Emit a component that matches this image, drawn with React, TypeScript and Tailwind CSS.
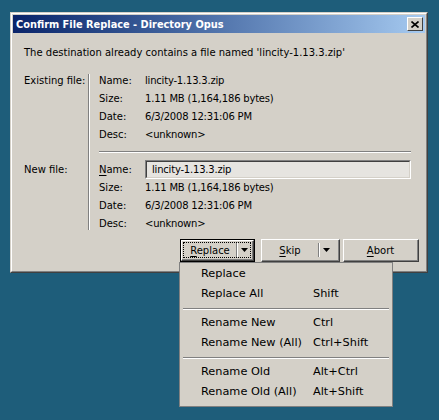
import React from "react";

function Arrow() {
  return (
    <svg width="7" height="4" viewBox="0 0 7 4" className="block">
      <polygon points="0,0 7,0 3.5,4" fill="#000" />
    </svg>
  );
}

function Row({ label, children }: { label: React.ReactNode; children: React.ReactNode }) {
  return (
    <div className="h-[18px] flex items-center">
      <div className="w-[46px] tracking-normal">{label}</div>
      <div>{children}</div>
    </div>
  );
}

const menuItems: (null | [string, string])[] = [
  ["Replace", ""],
  ["Replace All", "Shift"],
  null,
  ["Rename New", "Ctrl"],
  ["Rename New (All)", "Ctrl+Shift"],
  null,
  ["Rename Old", "Alt+Ctrl"],
  ["Rename Old (All)", "Alt+Shift"],
];

export default function App() {
  return (
    <div className="relative w-[439px] h-[420px] bg-[#1e5d7a] pl-[10px] pt-[12px] font-['DejaVu_Sans',Verdana,sans-serif] text-[10px] text-black leading-none">
      <div className="w-[418px] h-[261px] border border-t-[#d4d0c8] border-l-[#d4d0c8] border-r-[#404040] border-b-[#404040] bg-[#d4d0c8]">
        <div className="h-full border border-t-white border-l-white border-r-[#808080] border-b-[#808080] p-[1px] flex flex-col">
          {/* title bar */}
          <div className="h-[18px] flex items-center justify-between pl-[3px] pr-[2px] bg-linear-to-r from-[#0a246a] to-[#a6caf0]">
            <span className="font-bold text-white text-[9.8px] pt-[2px]">Confirm File Replace - Directory Opus</span>
            <div className="w-[16px] h-[14px] bg-[#d4d0c8] border border-t-white border-l-white border-r-[#404040] border-b-[#404040] flex items-center justify-center">
              <svg width="8" height="7" viewBox="0 0 8 7" className="block">
                <path d="M0.5 0.5 L7.5 6.5 M7.5 0.5 L0.5 6.5" stroke="#000" strokeWidth="1.6" />
              </svg>
            </div>
          </div>

          {/* body */}
          <div className="pl-[11px] pt-[11px]">
            <div className="h-[18px] flex items-center">The destination already contains a file named 'lincity-1.13.3.zip'</div>
            <div className="mt-[10px] flex">
              <div className="w-[64px] flex flex-col">
                <div className="h-[18px] flex items-center">Existing file:</div>
                <div className="h-[19px] mt-[70px] flex items-center">New file:</div>
              </div>
              <div className="mt-[2px] mb-[3px] w-[2px] border-l border-l-[#808080] border-r border-r-white" />
              <div className="pl-[9px] w-[321px] tracking-[-0.2px]">
                <Row label="Name:">lincity-1.13.3.zip</Row>
                <Row label="Size:">1.11 MB (1,164,186 bytes)</Row>
                <Row label="Date:">6/3/2008 12:31:06 PM</Row>
                <Row label="Desc:">&lt;unknown&gt;</Row>
                <div className="h-[16px] pt-[7px]">
                  <div className="border-t border-t-[#808080] border-b border-b-white" />
                </div>
                <div className="h-[19px] flex items-center">
                  <div className="w-[46px] tracking-normal">
                    <span className="underline underline-offset-2">N</span>ame:
                  </div>
                  <div className="flex-1 h-[19px] border border-t-[#808080] border-l-[#808080] border-r-white border-b-white">
                    <div className="h-full border border-t-[#404040] border-l-[#404040] border-r-[#d4d0c8] border-b-[#d4d0c8] bg-[#e6e4e0] flex items-center pl-[5px]">
                      lincity-1.13.3.zip
                    </div>
                  </div>
                </div>
                <Row label="Size:">1.11 MB (1,164,186 bytes)</Row>
                <Row label="Date:">6/3/2008 12:31:06 PM</Row>
                <Row label="Desc:">&lt;unknown&gt;</Row>
              </div>
            </div>
          </div>

          {/* buttons */}
          <div className="mt-[6px] flex justify-end pr-[6px]">
            <div className="w-[75px] h-[23px] border border-black">
              <div className="h-full border border-t-white border-l-white border-r-[#404040] border-b-[#404040]">
                <div className="h-full border-r border-b border-r-[#808080] border-b-[#808080] pl-[1px] pt-[1px]">
                  <div className="h-[16px] w-[68px] border border-dotted border-black flex">
                    <div className="flex-1 flex items-center justify-center pt-[1px]">
                      <span><span className="underline underline-offset-2">R</span>eplace</span>
                    </div>
                    <div className="w-[2px] border-l border-l-[#808080] border-r border-r-white" />
                    <div className="w-[12px] flex items-center justify-center">
                      <Arrow />
                    </div>
                  </div>
                </div>
              </div>
            </div>
            <div className="ml-[6px] w-[79px] h-[23px] border border-t-white border-l-white border-r-[#404040] border-b-[#404040]">
              <div className="h-full border-r border-b border-r-[#808080] border-b-[#808080] flex">
                <div className="w-[56px] flex items-center justify-center pt-[1px]">
                  <span><span className="underline underline-offset-2">S</span>kip</span>
                </div>
                <div className="my-[3px] w-[2px] border-l border-l-[#808080] border-r border-r-white" />
                <div className="w-[13px] flex items-center justify-center">
                  <Arrow />
                </div>
              </div>
            </div>
            <div className="ml-[3px] w-[76px] h-[23px] border border-t-white border-l-white border-r-[#404040] border-b-[#404040]">
              <div className="h-full border-r border-b border-r-[#808080] border-b-[#808080] flex items-center justify-center pt-[1px]">
                <span><span className="underline underline-offset-2">A</span>bort</span>
              </div>
            </div>
          </div>
        </div>
      </div>

      {/* dropdown menu */}
      <div className="absolute left-[179px] top-[262px] w-[214px] h-[145px] bg-[#d4d0c8] border border-[#808080] pt-[1px] pb-[3px] text-[11.3px]">
        {menuItems.map((m, i) =>
          m === null ? (
            <div key={i} className="h-[9px] flex items-center px-[3px]">
              <div className="flex-1 border-t border-t-[#808080] border-b border-b-white" />
            </div>
          ) : (
            <div key={i} className="h-[20px] flex items-center pl-[21px]">
              <div className="w-[112px]">{m[0]}</div>
              <div>{m[1]}</div>
            </div>
          )
        )}
      </div>
    </div>
  );
}
